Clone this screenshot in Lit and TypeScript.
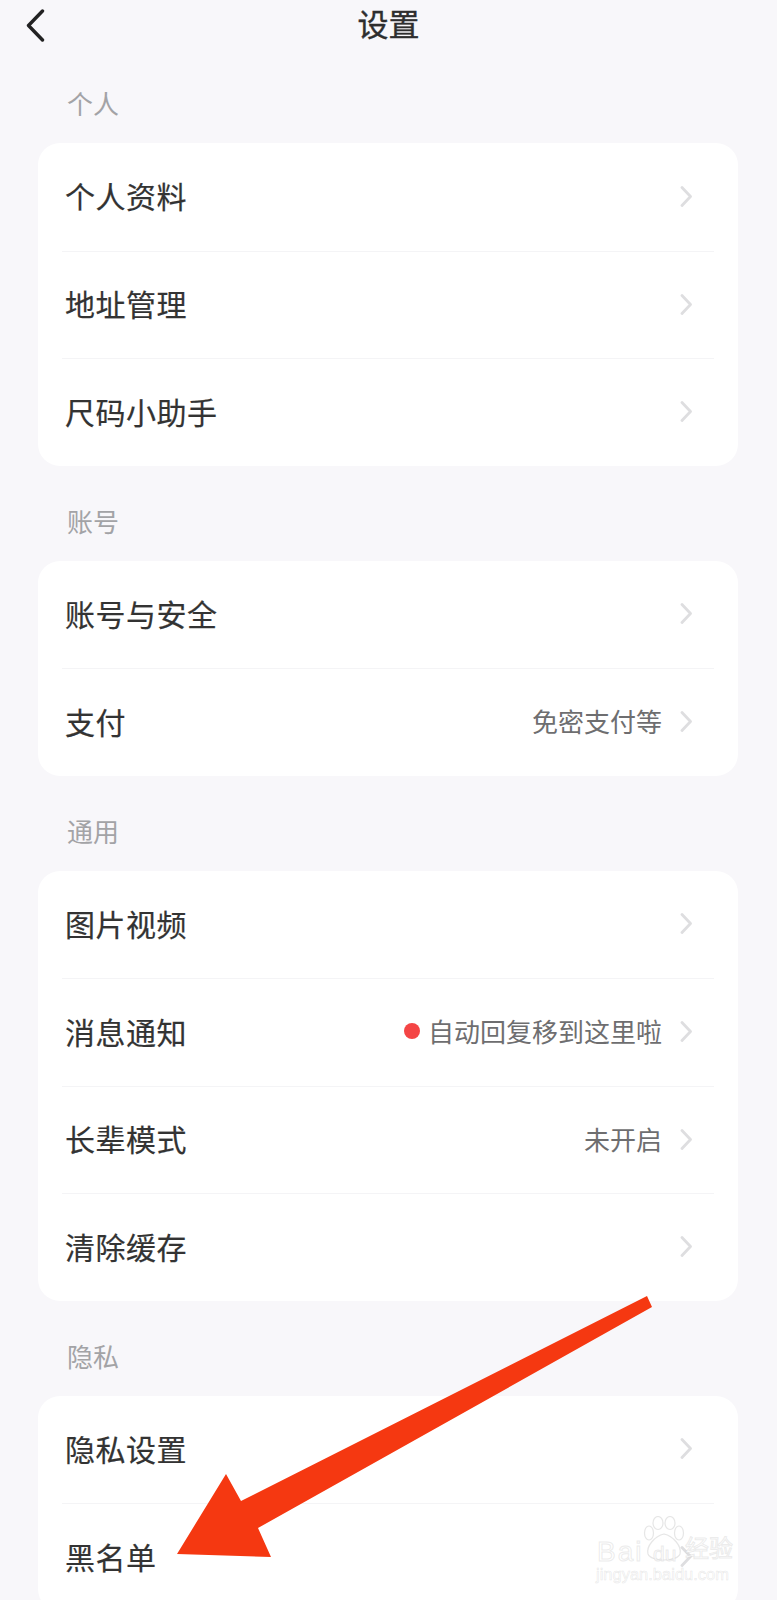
import { LitElement, html, css, svg } from "lit";
import { customElement } from "lit/decorators.js";

interface Row {
  label: string;
  value?: string;
  dot?: boolean;
}

interface Section {
  title: string;
  rows: Row[];
}

const SECTIONS: Section[] = [
  {
    title: "个人",
    rows: [{ label: "个人资料" }, { label: "地址管理" }, { label: "尺码小助手" }],
  },
  {
    title: "账号",
    rows: [{ label: "账号与安全" }, { label: "支付", value: "免密支付等" }],
  },
  {
    title: "通用",
    rows: [
      { label: "图片视频" },
      { label: "消息通知", value: "自动回复移到这里啦", dot: true },
      { label: "长辈模式", value: "未开启" },
      { label: "清除缓存" },
    ],
  },
  {
    title: "隐私",
    rows: [{ label: "隐私设置" }, { label: "黑名单" }],
  },
];

const chevron = svg`<path d="M2 1.5 L10.5 10.5 L2 19.5" fill="none" stroke="#dedee0" stroke-width="2.8" stroke-linecap="round" stroke-linejoin="round" />`;

@customElement("app-root")
export class AppRoot extends LitElement {
  static styles = css`
    :host {
      display: block;
      position: relative;
      width: 777px;
      height: 1600px;
      overflow: hidden;
      background: #f8f7fa;
      font-family: "Liberation Sans", "Noto Sans CJK SC", sans-serif;
      color: #333;
    }
    .header {
      display: flex;
      align-items: center;
      justify-content: center;
      position: relative;
      height: 48px;
      padding-bottom: 4px;
      box-sizing: border-box;
      font-size: 31px;
      color: #2e2e2e;
      -webkit-text-stroke: 0.4px #2e2e2e;
    }
    .back {
      position: absolute;
      left: 25px;
      top: 9px;
    }
    .section-title {
      box-sizing: border-box;
      height: 95px;
      padding: 40px 0 21px 67px;
      font-size: 26px;
      line-height: 34px;
      color: #a3a3a6;
    }
    .card {
      background: #fff;
      border-radius: 22px;
      margin: 0 39px 0 38px;
      padding: 0 24px;
    }
    .row {
      box-sizing: border-box;
      display: flex;
      align-items: center;
      justify-content: space-between;
      height: 107.5px;
      padding: 0 21px 3px 3px;
      font-size: 30px;
      letter-spacing: 0.5px;
      border-top: 1px solid #f4f4f6;
      -webkit-text-stroke: 0.2px #333;
    }
    .row:first-child {
      border-top: none;
    }
    .right {
      display: flex;
      align-items: center;
      font-size: 26px;
      letter-spacing: 0;
      color: #6e6e70;
      -webkit-text-stroke: 0;
    }
    .right svg {
      margin-top: 2px;
    }
    .value {
      margin-right: 18px;
    }
    .dot {
      width: 16px;
      height: 16px;
      border-radius: 50%;
      background: #f44545;
      margin-right: 8px;
    }
    .arrow {
      position: absolute;
      left: 0;
      top: 0;
    }
    .watermark {
      position: absolute;
      left: 596px;
      top: 1514px;
      width: 140px;
      height: 72px;
      color: rgba(255, 255, 255, 0.8);
      -webkit-text-stroke: 1px rgba(205, 205, 205, 0.4);
    }
    .wm-brand {
      position: absolute;
      left: 1px;
      top: 24px;
      font-size: 28px;
      line-height: 28px;
      letter-spacing: 2px;
      white-space: nowrap;
    }
    .wm-du {
      position: absolute;
      left: 57px;
      top: 29px;
      font-size: 21px;
      line-height: 22px;
      white-space: nowrap;
    }
    .wm-cn {
      position: absolute;
      left: 89px;
      top: 22px;
      font-size: 24px;
      line-height: 26px;
      white-space: nowrap;
    }
    .wm-url {
      position: absolute;
      left: 0;
      top: 51px;
      font-size: 16.5px;
      line-height: 18px;
      white-space: nowrap;
      -webkit-text-stroke: 0.6px rgba(205, 205, 205, 0.45);
    }
    .wm-paw {
      position: absolute;
      left: 47px;
      top: 2px;
    }
  `;

  private renderRow(row: Row) {
    return html`
      <div class="row">
        <span>${row.label}</span>
        <span class="right">
          ${row.dot ? html`<span class="dot"></span>` : ""}
          ${row.value ? html`<span class="value">${row.value}</span>` : ""}
          <svg width="13" height="21" viewBox="0 0 13 21">${chevron}</svg>
        </span>
      </div>
    `;
  }

  render() {
    return html`
      <div class="header">
        <svg class="back" width="21" height="33" viewBox="0 0 21 33">
          <path d="M17.5 2 L3.5 16.5 L17.5 31" fill="none" stroke="#222" stroke-width="3.4" stroke-linecap="round" stroke-linejoin="round" />
        </svg>
        <span>设置</span>
      </div>
      ${SECTIONS.map(
        (section) => html`
          <div class="section-title">${section.title}</div>
          <div class="card">${section.rows.map((row) => this.renderRow(row))}</div>
        `
      )}
      <svg class="arrow" width="777" height="1600" viewBox="0 0 777 1600">
        <polygon points="647,1296 652,1307 258,1528 271,1557 177,1554 226,1474 241,1501" fill="#f53811" />
      </svg>
      <div class="watermark">
        <svg class="wm-paw" width="42" height="46" viewBox="0 0 42 46">
          <g fill="rgba(255,255,255,0.6)" stroke="rgba(205,205,205,0.5)" stroke-width="1.2">
            <ellipse cx="6" cy="17" rx="4.5" ry="7" />
            <ellipse cx="15" cy="7" rx="5" ry="6.5" />
            <ellipse cx="27" cy="7" rx="5" ry="6.5" />
            <ellipse cx="36" cy="17" rx="4.5" ry="7" />
            <path d="M21 18 C12 20 3 30 5 38 C8 46 34 46 37 38 C39 30 30 20 21 18 Z" />
          </g>
        </svg>
        <span class="wm-brand">Bai</span>
        <span class="wm-du">du</span>
        <span class="wm-cn">经验</span>
        <span class="wm-url">jingyan.baidu.com</span>
      </div>
    `;
  }
}
